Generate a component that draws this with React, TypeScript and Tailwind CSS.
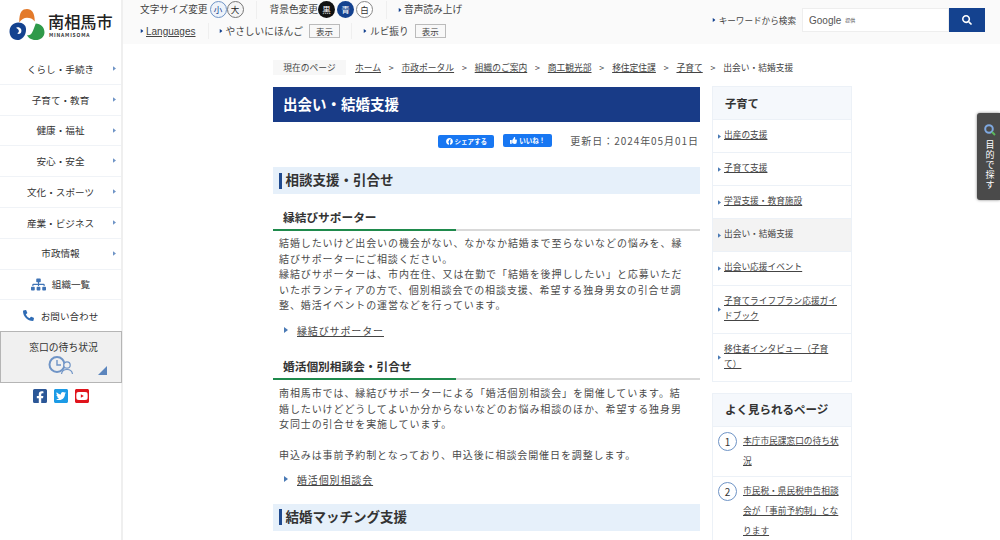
import React from "react";
import { FaFacebookSquare, FaTwitterSquare, FaYoutubeSquare, FaSearch, FaPhoneAlt, FaSitemap, FaThumbsUp, FaFacebook } from "react-icons/fa";

const Arrow = ({ c = "text-[#4a7ab5]", w = 4, h = 6 }: { c?: string; w?: number; h?: number }) => (
  <svg width={w} height={h} viewBox="0 0 4 6" className={`shrink-0 ${c}`}><path d="M0 0L4 3L0 6Z" fill="currentColor" /></svg>
);

const navItems = ["くらし・手続き", "子育て・教育", "健康・福祉", "安心・安全", "文化・スポーツ", "産業・ビジネス", "市政情報"];
const crumbs = ["ホーム", "市政ポータル", "組織のご案内", "商工観光部", "移住定住課", "子育て"];

function Logo() {
  return (
    <svg width="36" height="33" viewBox="0 0 36 34" className="shrink-0">
      <path d="M10 14 C10 3 13 0 18 0 C23 0 26 4 26 13 C24 10 21 9 18 9 C15 9 12 11 10 14Z" fill="#e37a2b" />
      <path d="M9 14 C14 14 17 17 17 21 C17 27 13 32 8 32 C3 32 0 28 0 23 C0 18 4 14 9 14Z" fill="#14428f" />
      <path d="M7 19 C11 18 13 21 12 24 C11 26 9 26 8 25 C10 24 10 22 9 21 C8 20 7 20 7 19Z" fill="#fff" />
      <path d="M27 15 C32 15 36 19 36 24 C36 29 32 32 27 32 C22 32 19 29 18 27 C23 28 24 23 27 15Z" fill="#2f9a4a" />
    </svg>
  );
}

function Sidebar() {
  return (
    <aside className="w-[123px] shrink-0 border-r-2 border-[#efefef] flex flex-col h-[540px]">
      <div className="h-[54px] flex items-start pl-[9px] pt-[9px] gap-[3px]">
        <Logo />
        <div className="flex flex-col mt-[3px]">
          <span className="text-[16.2px] leading-[18px] font-medium text-[#222] whitespace-nowrap">南相馬市</span>
          <span className="text-[5px] leading-[7px] mt-[1px] font-bold tracking-[0.8px] ml-[1px] text-[#333]">MINAMISOMA</span>
        </div>
      </div>
      <nav className="flex flex-col">
        {navItems.map((t) => (
          <div key={t} className="h-[30.8px] border-b border-[#f0f3f7] flex items-center relative justify-center text-[9.6px] text-[#333]">
            <span>{t}</span>
            <span className="absolute left-[113px] top-[12px]"><Arrow w={3} h={5} c="text-[#6f94c6]" /></span>
          </div>
        ))}
        <div className="h-[30.8px] border-b border-[#f0f3f7] flex items-center justify-center gap-[6px] text-[9.6px] text-[#333]">
          <FaSitemap className="text-[#3f73b5] text-[15px]" />
          <span>組織一覧</span>
        </div>
        <div className="h-[31px] flex items-center justify-center gap-[7px] text-[9.6px] text-[#333]">
          <FaPhoneAlt className="text-[#2f6cb5] text-[11px]" />
          <span>お問い合わせ</span>
        </div>
        <div className="h-[52px] -mr-[1px] bg-[#f0f0f0] border border-[#b5b5b5] relative flex flex-col items-center pt-[9px] pl-[5px] text-[9.8px] text-[#333]">
          <span className="leading-[12px]">窓口の待ち状況</span>
          <svg width="26" height="20" viewBox="0 0 26 20" fill="none" stroke="#6f94c6" className="mt-[3px] mr-[5px]">
            <circle cx="9" cy="8.5" r="7.5" strokeWidth="2" />
            <path d="M9 4V9H13" strokeWidth="1.4" />
            <circle cx="19" cy="9" r="3.2" strokeWidth="1.2" fill="#f0f0f0" />
            <path d="M13.5 18C14 14.5 16 13.5 19 13.5C22 13.5 24 14.5 24.5 18" strokeWidth="1.2" fill="#f0f0f0" />
          </svg>
          <svg width="9" height="9" viewBox="0 0 9 9" className="absolute right-[14px] bottom-[7px]"><path d="M9 0V9H0Z" fill="#5b85bd" /></svg>
        </div>
      </nav>
      <div className="flex justify-center gap-[5px] pt-[5px]">
        <FaFacebookSquare className="text-[#2b5797] text-[16px]" />
        <FaTwitterSquare className="text-[#1c9be6] text-[16px]" />
        <FaYoutubeSquare className="text-[#e0141c] text-[16px]" />
      </div>
    </aside>
  );
}

function Round({ t, cls }: { t: string; cls: string }) {
  return <span className={`w-[17px] h-[17px] rounded-full flex items-center justify-center text-[8.5px] leading-none ${cls}`}>{t}</span>;
}

function Btn({ t }: { t: string }) {
  return <span className="w-[31px] h-[14px] border border-[#bbb] bg-[#f8f8f8] flex items-center justify-center text-[8.5px] text-[#444] ml-[6px]">{t}</span>;
}

function Header() {
  return (
    <header className="h-[44px] bg-[#fafafa] flex shrink-0 text-[9.7px] text-[#444]">
      <div className="w-[345px] pl-[17px] flex flex-col shrink-0">
        <div className="flex items-center h-[19px]">
          <span>文字サイズ変更</span>
          <span className="flex ml-[2px]">
            <Round t="小" cls="border border-[#6f94c6] bg-[#eef3fa] text-[#14428f]" />
            <Round t="大" cls="border border-[#777] bg-[#f5f5f5] text-[#222]" />
          </span>
          <span className="w-px h-[18px] bg-[#efefef] ml-[12px] mr-[13px]" />
          <span>背景色変更</span>
          <span className="flex">
            <Round t="黒" cls="bg-[#111] text-white" />
            <Round t="青" cls="bg-[#14428f] text-white ml-[2px]" />
            <Round t="白" cls="border border-[#888] bg-white text-[#333] ml-[2px]" />
          </span>
          <span className="w-px h-[18px] bg-[#efefef] ml-[13px] mr-[11px]" />
          <Arrow c="text-[#14428f] scale-75" />
          <span className="ml-[2px]">音声読み上げ</span>
        </div>
        <div className="flex items-center h-[22px] mt-[1px]">
          <Arrow c="text-[#14428f] scale-75" />
          <span className="ml-[2px] underline text-[10px] font-['Liberation_Sans',sans-serif]">Languages</span>
          <span className="w-px h-[16px] bg-[#efefef] ml-[12px] mr-[10px]" />
          <Arrow c="text-[#14428f] scale-75" />
          <span className="ml-[3px]">やさしいにほんご</span>
          <Btn t="表示" />
          <span className="w-px h-[16px] bg-[#efefef] ml-[11px] mr-[11px]" />
          <Arrow c="text-[#14428f] scale-75" />
          <span className="ml-[3px]">ルビ振り</span>
          <Btn t="表示" />
        </div>
      </div>
      <div className="flex-1 flex items-start justify-end pr-[15px] pt-[8px]">
        <div className="flex items-center h-[24px]">
          <Arrow c="text-[#14428f] scale-75" />
          <span className="ml-[3px] text-[8.6px] mr-[6px]">キーワードから検索</span>
          <div className="w-[147px] h-[24px] bg-white border border-[#eeeeee] flex items-center pl-[6px] gap-[4px]">
            <span className="text-[10px] text-[#555] font-['Liberation_Sans',sans-serif]">Google</span>
            <span className="text-[5px] text-[#555]">提供</span>
          </div>
          <div className="w-[36px] h-[24px] bg-[#14428f] flex items-center justify-center">
            <FaSearch className="text-white text-[10px]" />
          </div>
        </div>
      </div>
    </header>
  );
}

function H2({ t }: { t: string }) {
  return (
    <h2 className="h-[27px] bg-[#e6f0fa] flex items-center pl-[6px] font-bold text-[13.5px] text-[#333]">
      <span className="w-[3px] h-[16px] bg-[#1f4a8f] mr-[3.5px]" />
      <span className="mb-[3px]">{t}</span>
    </h2>
  );
}

function H3({ t }: { t: string }) {
  return (
    <div className="h-[23px] flex flex-col">
      <h3 className="h-[20px] pl-[10px] font-bold text-[11.7px] leading-[16px] text-[#333]">{t}</h3>
      <div className="flex h-[2px]">
        <span className="w-[183px] bg-[#1f8a4c]" />
        <span className="flex-1 bg-[#d9d9d9]" />
      </div>
    </div>
  );
}

function Body({ children, mt }: { children: React.ReactNode; mt: string }) {
  return <p className={`pl-[6px] pr-[12px] ${mt} text-[10px] leading-[15.6px] tracking-[0.9px] text-[#4a4a4a]`}>{children}</p>;
}

function DocLink({ t }: { t: string }) {
  return (
    <div className="flex items-center pl-[11px] gap-[9px] text-[10px] tracking-[0.87px] text-[#444] leading-[15px]">
      <Arrow />
      <span className="underline">{t}</span>
    </div>
  );
}

function Main() {
  return (
    <main className="w-[427px] shrink-0">
      <div className="h-[43px]"></div>
      <h1 className="h-[35px] bg-[#183b87] text-white font-bold text-[14.5px] flex items-center pl-[10px]">
        <span className="mb-[2px]">出会い・結婚支援</span>
      </h1>
      <div className="h-[45px] flex items-start justify-end pt-[12px]">
        <span className="w-[56px] h-[13px] bg-[#1877f2] rounded-[2px] mt-[1px] text-white text-[6.5px] font-bold flex items-center justify-center gap-[2px]">
          <FaFacebook className="text-[7px]" />シェアする
        </span>
        <span className="w-[49px] h-[13px] bg-[#1877f2] rounded-[2px] ml-[9px] text-white text-[6.5px] font-bold flex items-center justify-center gap-[2px]">
          <FaThumbsUp className="text-[7px]" />いいね！
        </span>
        <span className="ml-[18px] mr-[1px] text-[10px] leading-[14px] tracking-[0.95px] text-[#555]">更新日：2024年05月01日</span>
      </div>
      <H2 t="相談支援・引合せ" />
      <div className="mt-[15px]"><H3 t="縁結びサポーター" /></div>
      <Body mt="mt-[3px]">
        結婚したいけど出会いの機会がない、なかなか結婚まで至らないなどの悩みを、縁結びサポーターにご相談ください。<br />
        縁結びサポーターは、市内在住、又は在勤で「結婚を後押ししたい」と応募いただいたボランティアの方で、個別相談会での相談支援、希望する独身男女の引合せ調整、婚活イベントの運営などを行っています。
      </Body>
      <div className="mt-[10px]"><DocLink t="縁結びサポーター" /></div>
      <div className="mt-[20px]"><H3 t="婚活個別相談会・引合せ" /></div>
      <Body mt="mt-[4px]">
        南相馬市では、縁結びサポーターによる「婚活個別相談会」を開催しています。結婚したいけどどうしてよいか分からないなどのお悩み相談のほか、希望する独身男女同士の引合せを実施しています。<br /><br />
        申込みは事前予約制となっており、申込後に相談会開催日を調整します。
      </Body>
      <div className="mt-[9px]"><DocLink t="婚活個別相談会" /></div>
      <div className="mt-[17px]"><H2 t="結婚マッチング支援" /></div>
    </main>
  );
}

const subItems: [string, string, boolean?][] = [
  ["出産の支援", "h-[33px]"],
  ["子育て支援", "h-[33px]"],
  ["学習支援・教育施設", "h-[33px]"],
  ["出会い・結婚支援", "h-[33px]", true],
  ["出会い応援イベント", "h-[34px]"],
  ["子育てライフプラン応援ガイドブック", "h-[48px]"],
  ["移住者インタビュー（子育て）", "h-[48px]"],
];

function Right() {
  return (
    <div className="w-[140px] shrink-0 ml-[12px] pt-[42px] text-[8.7px] text-[#444]">
      <div className="border border-[#ecf1f7]">
        <div className="h-[32px] bg-[#f5f8fc] flex items-center pl-[12px] font-bold text-[11.3px] text-[#333]">子育て</div>
        {subItems.map(([t, h, cur]) => (
          <div key={t} className={`${h} border-t border-[#ecf1f7] flex items-center pl-[5px] pr-[12px] gap-[3px] ${cur ? "bg-[#f3f3f3]" : ""}`}>
            <Arrow w={3} h={5} />
            <span className={`leading-[14.6px] mb-[2px] ${cur ? "" : "underline"}`}>{t}</span>
          </div>
        ))}
      </div>
      <div className="border border-[#ecf1f7] mt-[11px]">
        <div className="h-[32px] bg-[#f5f8fc] flex items-center pl-[12px] font-bold text-[11.5px] text-[#333]">よく見られるページ</div>
        {["本庁市民課窓口の待ち状況", "市民税・県民税申告相談会が「事前予約制」となります"].map((t, i) => (
          <div key={t} className="border-t border-[#ecf1f7] flex items-start pl-[5px] pr-[11px] pt-[5px] pb-[5px] gap-[6px]">
            <span className="w-[19px] h-[19px] rounded-full border border-[#6f94c6] flex items-center justify-center text-[10px] text-[#333] shrink-0">{i + 1}</span>
            <span className="underline leading-[20px] -mt-[1px]">{t}</span>
          </div>
        ))}
      </div>
    </div>
  );
}

export default function App() {
  return (
    <div className="w-[1000px] h-[540px] overflow-hidden bg-white flex relative font-['Noto_Sans_CJK_JP',sans-serif]">
      <Sidebar />
      <div className="flex-1 flex flex-col min-w-0">
        <Header />
        <div className="flex pl-[150px] relative">
          <Main />
          <Right />
          <div className="absolute left-[150px] top-[16px] flex items-center text-[8.75px] text-[#444] whitespace-nowrap">
            <span className="w-[73px] h-[15px] bg-[#f7f7f7] flex items-center justify-center mr-[9px]">現在のページ</span>
            {crumbs.map((c) => (
              <React.Fragment key={c}>
                <span className="underline">{c}</span>
                <span className="mx-[7.8px] text-[9px]">&gt;</span>
              </React.Fragment>
            ))}
            <span>出会い・結婚支援</span>
          </div>
        </div>
      </div>
      <div className="absolute right-0 top-[113px] w-[23px] h-[87px] bg-[#4a4a4a] rounded-l-[3px] shadow-[0_0_3px_rgba(0,0,0,0.5)] flex flex-col items-center pt-[11px] pl-[3px]">
        <svg width="12" height="12" viewBox="0 0 12 12" fill="none" className="mb-[4px]">
          <circle cx="5" cy="5" r="3.8" stroke="#7fa8e0" strokeWidth="2" />
          <path d="M8 8L11 11" stroke="#5cb85c" strokeWidth="2" />
        </svg>
        {["目", "的", "で", "探", "す"].map((c) => (
          <span key={c} className="text-white text-[9px] leading-[10px] h-[10px]">{c}</span>
        ))}
      </div>
    </div>
  );
}
